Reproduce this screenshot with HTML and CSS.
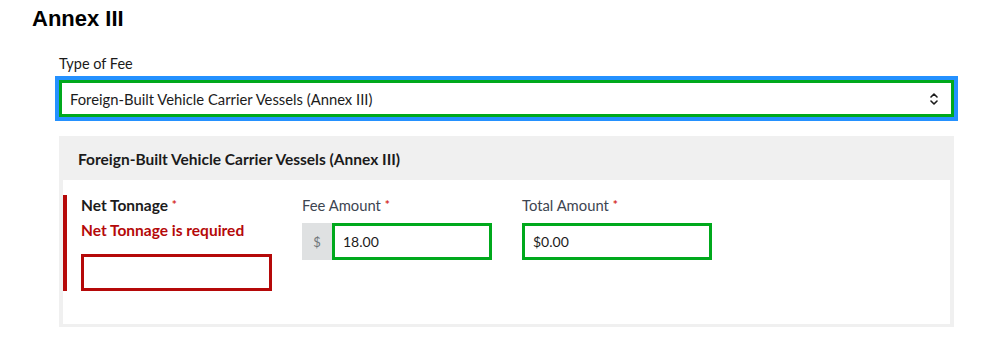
FILE: index.html
```html
<!DOCTYPE html>
<html lang="en">
<head>
<meta charset="utf-8">
<title>Annex III</title>
<link rel="stylesheet" href="styles.css">
</head>
<body>
<div class="page">
  <h1 class="title">Annex III</h1>
  <div class="form">
    <div class="field-label">Type of Fee</div>
    <div class="select" role="combobox" aria-expanded="false">
      <span class="select-text">Foreign-Built Vehicle Carrier Vessels (Annex III)</span>
      <svg class="select-icon" width="8" height="14" viewBox="0 0 8 14" aria-hidden="true">
        <path d="M1 5 L4 2 L7 5" fill="none" stroke="#1b1b1b" stroke-width="1.6" stroke-linecap="round" stroke-linejoin="round"/>
        <path d="M1 9 L4 12 L7 9" fill="none" stroke="#1b1b1b" stroke-width="1.6" stroke-linecap="round" stroke-linejoin="round"/>
      </svg>
    </div>
    <div class="panel">
      <div class="panel-header">Foreign-Built Vehicle Carrier Vessels (Annex III)</div>
      <div class="panel-body">
        <div class="group group-error">
          <div class="label label-bold">Net Tonnage <span class="req">*</span></div>
          <div class="error-msg">Net Tonnage is required</div>
          <div class="input input-error"></div>
        </div>
        <div class="group">
          <div class="label">Fee Amount <span class="req">*</span></div>
          <div class="input-row">
            <div class="prefix">$</div>
            <div class="input input-ok input-grow">18.00</div>
          </div>
        </div>
        <div class="group">
          <div class="label">Total Amount <span class="req">*</span></div>
          <div class="input input-ok">$0.00</div>
        </div>
      </div>
    </div>
  </div>
</div>
</body>
</html>
```
FILE: styles.css
```css
html, body {
  margin: 0;
  padding: 0;
  background: #ffffff;
}

body {
  font-family: Lato, "Noto Sans", sans-serif;
  color: #1b1b1b;
}

.page {
  padding: 6px 0 0 32px;
}

.title {
  margin: 0;
  font-family: "Liberation Sans", Arial, sans-serif;
  font-weight: 700;
  font-size: 22px;
  line-height: 26px;
  color: #000000;
}

.form {
  margin-left: 27px;
  width: 895px;
}

.field-label {
  margin-top: 22px;
  font-size: 14.5px;
  line-height: 20px;
  color: #1b1b1b;
}

.select {
  margin-top: 6px;
  height: 37px;
  box-sizing: border-box;
  border: 3px solid #00a91c;
  outline: 4px solid #2491ff;
  display: flex;
  align-items: center;
  justify-content: space-between;
  padding: 0 13px 0 8px;
  font-size: 14.8px;
  background: #ffffff;
}

.select-icon {
  display: block;
}

.panel {
  margin-top: 19px;
  background: #f0f0f0;
  padding: 0 4px 3px 4px;
}

.panel-header {
  height: 44px;
  display: flex;
  align-items: center;
  padding-left: 15px;
  padding-top: 1px;
  box-sizing: border-box;
  font-weight: 700;
  font-size: 15.5px;
  color: #1b1b1b;
}

.panel-body {
  background: #ffffff;
  display: flex;
  align-items: flex-start;
  gap: 30px;
  padding: 15px 0 33px 0;
}

.group {
  display: flex;
  flex-direction: column;
  width: 190px;
}

.group-error {
  width: 191px;
  border-left: 4px solid #b50909;
  padding-left: 14px;
}

.label {
  font-size: 14.8px;
  line-height: 20px;
  color: #3d4551;
}

.label-bold {
  font-weight: 700;
  font-size: 15.5px;
  color: #1b1b1b;
}

.req {
  color: #d52b1e;
  font-size: 12px;
  font-weight: 700;
  vertical-align: 2px;
}

.error-msg {
  margin-top: 5px;
  font-size: 15.5px;
  line-height: 20px;
  font-weight: 700;
  color: #b50909;
}

.input {
  height: 37px;
  box-sizing: border-box;
  background: #ffffff;
  display: flex;
  align-items: center;
  padding-left: 8px;
  font-size: 14px;
  color: #1b1b1b;
}

.group .label + .input,
.group .label + .input-row {
  margin-top: 8px;
}

.error-msg + .input {
  margin-top: 14px;
}

.input-error {
  border: 3px solid #b50909;
}

.input-ok {
  border: 3px solid #00a91c;
}

.input-row {
  display: flex;
  height: 37px;
}

.prefix {
  width: 30px;
  background: #dfe1e2;
  color: #71767a;
  font-size: 13px;
  display: flex;
  align-items: center;
  justify-content: center;
}

.input-grow {
  flex: 1;
}
```
